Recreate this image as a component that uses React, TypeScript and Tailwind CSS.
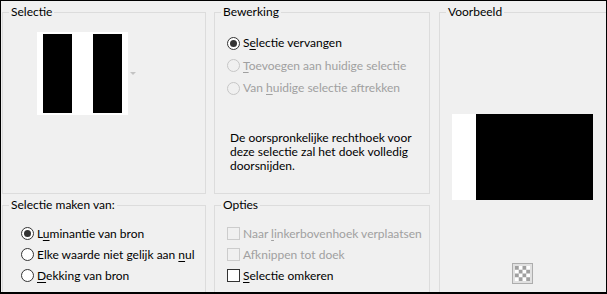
import type { ReactNode } from 'react';

const FONT = "font-['Lato','Liberation_Sans',sans-serif]";

function Group({ title, className, children }: { title: string; className?: string; children?: ReactNode }) {
  return (
    <fieldset className={`border border-[#dcdcdc] ${className ?? ''}`}>
      <legend className="ml-[6px] px-[2px] text-[12px] leading-[16px] text-black">{title}</legend>
      {children}
    </fieldset>
  );
}

function Radio({ checked, disabled }: { checked?: boolean; disabled?: boolean }) {
  return (
    <svg width="13" height="13" viewBox="0 0 13 13" className="shrink-0">
      <circle
        cx="6.5"
        cy="6.5"
        r="6"
        fill={disabled ? '#f0f0f0' : '#ffffff'}
        stroke={disabled ? '#c6c6c6' : '#333333'}
        strokeWidth="1"
      />
      {checked && <circle cx="6.5" cy="6.5" r="3.5" fill="#333333" />}
    </svg>
  );
}

function Check({ disabled }: { disabled?: boolean }) {
  return (
    <span
      className={`h-[13px] w-[13px] shrink-0 border ${
        disabled ? 'border-[#cccccc] bg-[#f0f0f0]' : 'border-[#333333] bg-white'
      }`}
    />
  );
}

// label with one underlined mnemonic letter
function Mn({ pre, hot, post }: { pre?: string; hot: string; post: string }) {
  return (
    <span className="whitespace-pre">
      {pre}
      <span className="underline underline-offset-[2px]">{hot}</span>
      {post}
    </span>
  );
}

export default function App() {
  return (
    <div
      className={`${FONT} flex h-[294px] w-[607px] overflow-hidden border border-b-2 border-black bg-[#f0f0f0] pl-px pt-[3px] text-[12px] text-black`}
    >
      <div className="grid shrink-0 grid-cols-[204px_216px] grid-rows-[190px_210px] gap-x-[8px] gap-y-[3px]">
        <Group title="Selectie">
          <div className="ml-[34px] mt-[12px] flex items-center">
            <svg width="91" height="83" viewBox="0 0 91 83">
              <rect width="91" height="83" fill="#ffffff" />
              <rect x="6" y="2" width="29" height="79" fill="#000000" />
              <rect x="56" y="2" width="29" height="79" fill="#000000" />
            </svg>
            <svg width="6" height="3" viewBox="0 0 6 3" className="ml-[2px]">
              <path d="M0 0H6L3 3Z" fill="#c3c3c3" />
            </svg>
          </div>
        </Group>

        <Group title="Bewerking">
          <div className="mt-[12px] flex flex-col pl-[12px]">
            <div className="flex h-[22px] items-center gap-[3px]">
              <Radio checked />
              <Mn pre="S" hot="e" post="lectie vervangen" />
            </div>
            <div className="flex h-[23px] items-center gap-[3px] text-[#a0a0a0]">
              <Radio disabled />
              <Mn hot="T" post="oevoegen aan huidige selectie" />
            </div>
            <div className="flex h-[22px] items-center gap-[3px] text-[#a0a0a0]">
              <Radio disabled />
              <Mn pre="Van " hot="h" post="uidige selectie aftrekken" />
            </div>
          </div>
          <p className="mt-[32px] pl-[15px] leading-[14px]">
            De oorspronkelijke rechthoek voor
            <br />
            deze selectie zal het doek volledig
            <br />
            doorsnijden.
          </p>
        </Group>

        <Group title="Selectie maken van:">
          <div className="mt-[10px] flex flex-col pl-[18px]">
            <div className="flex h-[21px] items-center gap-[3px]">
              <Radio checked />
              <Mn pre="L" hot="u" post="minantie van bron" />
            </div>
            <div className="flex h-[21px] items-center gap-[3px]">
              <Radio />
              <Mn pre="Elke waarde niet gelijk aan " hot="n" post="ul" />
            </div>
            <div className="flex h-[21px] items-center gap-[3px]">
              <Radio />
              <Mn hot="D" post="ekking van bron" />
            </div>
          </div>
        </Group>

        <Group title="Opties">
          <div className="mt-[10px] flex flex-col pl-[12px]">
            <div className="flex h-[21px] items-center gap-[3px] text-[#a0a0a0]">
              <Check disabled />
              <Mn pre="Naar " hot="l" post="inkerbovenhoek verplaatsen" />
            </div>
            <div className="flex h-[21px] items-center gap-[3px] text-[#a0a0a0]">
              <Check disabled />
              <Mn pre="Af" hot="k" post="nippen tot doek" />
            </div>
            <div className="flex h-[21px] items-center gap-[3px]">
              <Check />
              <Mn hot="S" post="electie omkeren" />
            </div>
          </div>
        </Group>
      </div>

      <Group title="Voorbeeld" className="ml-[9px] h-[320px] w-[190px] shrink-0">
        <div className="flex flex-col">
          <svg width="141" height="86" viewBox="0 0 141 86" className="ml-[12px] mt-[94px]">
            <rect width="24" height="86" fill="#ffffff" />
            <rect x="24" width="117" height="86" fill="#000000" />
          </svg>
          <div className="ml-[72px] mt-[63px] flex h-[21px] w-[21px] items-center justify-center border border-[#adadad] bg-[#e1e1e1]">
            <svg width="15" height="15" viewBox="0 0 16 16">
              <rect width="16" height="16" fill="#ffffff" />
              <path
                d="M0 0h4v4H0zM8 0h4v4H8zM4 4h4v4H4zM12 4h4v4h-4zM0 8h4v4H0zM8 8h4v4H8zM4 12h4v4H4zM12 12h4v4h-4z"
                fill="#a0a0a0"
              />
            </svg>
          </div>
        </div>
      </Group>
    </div>
  );
}
